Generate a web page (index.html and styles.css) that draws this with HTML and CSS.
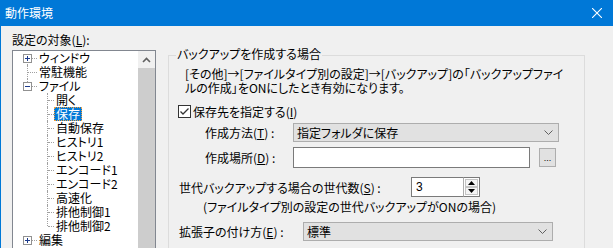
FILE: index.html
```html
<!DOCTYPE html>
<html lang="ja">
<head>
<meta charset="utf-8">
<title>動作環境</title>
<link rel="stylesheet" href="styles.css">
</head>
<body>
<div class="window">
  <div class="titlebar">
    <span class="title">動作環境</span>
    <svg class="close" width="10" height="10" viewBox="0 0 10 10"><path d="M0 0L10 10M10 0L0 10" stroke="#fff" stroke-width="1.1" fill="none"/></svg>
  </div>
  <div class="content">
    <div class="left">
      <div class="lbl">設定の対象(<u>L</u>):</div>
      <div class="tree">
        <div class="tree-items">
          <div class="node top has-exp vl-down"><svg class="exp" width="9" height="9"><rect x="0.5" y="0.5" width="8" height="8" fill="#fff" stroke="#919191"/><path d="M2 4.5H7M4.5 2V7" stroke="#1c3a8c"/></svg><span class="t">ウィンドウ</span></div>
          <div class="node top no-exp vl-full"><span class="t">常駐機能</span></div>
          <div class="node top has-exp vl-up"><svg class="exp" width="9" height="9"><rect x="0.5" y="0.5" width="8" height="8" fill="#fff" stroke="#919191"/><path d="M2 4.5H7" stroke="#1c3a8c"/></svg><span class="t">ファイル</span></div>
          <div class="node child"><span class="t">開く</span></div>
          <div class="node child"><span class="t sel">保存</span></div>
          <div class="node child"><span class="t">自動保存</span></div>
          <div class="node child"><span class="t">ヒストリ1</span></div>
          <div class="node child"><span class="t">ヒストリ2</span></div>
          <div class="node child"><span class="t">エンコード1</span></div>
          <div class="node child"><span class="t">エンコード2</span></div>
          <div class="node child"><span class="t">高速化</span></div>
          <div class="node child"><span class="t">排他制御1</span></div>
          <div class="node child last"><span class="t">排他制御2</span></div>
          <div class="node top has-exp"><svg class="exp" width="9" height="9"><rect x="0.5" y="0.5" width="8" height="8" fill="#fff" stroke="#919191"/><path d="M2 4.5H7M4.5 2V7" stroke="#1c3a8c"/></svg><span class="t">編集</span></div>
        </div>
        <div class="vscroll">
          <div class="sb-arrow"><svg width="9" height="6" viewBox="0 0 9 6"><path d="M1 5L4.5 1.5L8 5" stroke="#606060" stroke-width="1.6" fill="none"/></svg></div>
          <div class="sb-thumb"></div>
        </div>
      </div>
    </div>
    <div class="right">
      <div class="group">
        <span class="legend">バックアップを作成する場合</span>
        <div class="desc">[その他]→[ファイルタイプ別の設定]→[バックアップ]の「バックアップファイ<br>ルの作成」をONにしたとき有効になります。</div>
        <div class="row check-row">
          <svg class="checkbox" width="13" height="13" viewBox="0 0 13 13"><rect x="0.5" y="0.5" width="12" height="12" fill="#fff" stroke="#333"/><path d="M2.5 6.5L5 9L10.5 3.5" stroke="#333" stroke-width="1.3" fill="none"/></svg>
          <span>保存先を指定する(<u>I</u>)</span>
        </div>
        <div class="row method-row">
          <span class="label w-method">作成方法(<u>T</u>) :</span>
          <div class="select sel-method"><span>指定フォルダに保存</span><svg width="9" height="5" viewBox="0 0 9 5"><path d="M0.5 0.5L4.5 4.5L8.5 0.5" stroke="#606060" fill="none"/></svg></div>
        </div>
        <div class="row place-row">
          <span class="label w-method">作成場所(<u>D</u>) :</span>
          <div class="textbox tb-place"></div>
          <div class="btn-dots">...</div>
        </div>
        <div class="row gen-row">
          <span class="label w-gen">世代バックアップする場合の世代数(<u>S</u>) :</span>
          <div class="spin-input">3</div>
          <div class="spin-btns">
            <div class="spin-btn"><svg width="7" height="4" viewBox="0 0 7 4"><path d="M0 4L3.5 0L7 4Z" fill="#000"/></svg></div>
            <div class="spin-btn"><svg width="7" height="4" viewBox="0 0 7 4"><path d="M0 0L3.5 4L7 0Z" fill="#000"/></svg></div>
          </div>
        </div>
        <div class="note">(ファイルタイプ別の設定の世代バックアップがONの場合)</div>
        <div class="row ext-row">
          <span class="label w-ext">拡張子の付け方(<u>E</u>) :</span>
          <div class="select sel-ext"><span>標準</span><svg width="9" height="5" viewBox="0 0 9 5"><path d="M0.5 0.5L4.5 4.5L8.5 0.5" stroke="#606060" fill="none"/></svg></div>
        </div>
      </div>
    </div>
  </div>
</div>
</body>
</html>
```
FILE: styles.css
```css
html, body {
  margin: 0;
  padding: 0;
}
body {
  width: 613px;
  height: 248px;
  overflow: hidden;
  background: #f0f0f0;
  font-family: "Noto Sans CJK JP", "Noto Sans", sans-serif;
  font-size: 12px;
  font-feature-settings: "palt";
  color: #000;
}
u { text-decoration: underline; text-underline-offset: 1px; }

.window {
  height: 248px;
  display: flex;
  flex-direction: column;
}
.titlebar {
  height: 26px;
  flex: none;
  background: #0078d7;
  color: #fff;
  display: flex;
  align-items: center;
  justify-content: space-between;
  padding: 0 11px 0 5px;
  line-height: 14px;
}
.title { font-size: 12px; }
.close { display: block; }

.content {
  flex: 1;
  display: flex;
  border-left: 1px solid #0078d7;
  padding-left: 11px;
  min-height: 0;
}
.left {
  width: 144px;
  flex: none;
  padding-top: 7px;
}
.lbl {
  height: 14px;
  line-height: 14px;
  margin-bottom: 3px;
  white-space: nowrap;
}
.tree {
  height: 300px;
  border: 1px solid #828790;
  background: #fff;
  display: flex;
  box-sizing: border-box;
}
.tree-items {
  flex: 1;
  position: relative;
}
.vscroll {
  width: 17px;
  flex: none;
  background: #f0f0f0;
  display: flex;
  flex-direction: column;
}
.sb-arrow {
  height: 17px;
  display: flex;
  align-items: center;
  justify-content: center;
}
.sb-arrow svg { display: block; }
.sb-thumb {
  flex: 1;
  background: #cdcdcd;
}

.node {
  position: relative;
  height: 14px;
  line-height: 14px;
  white-space: nowrap;
}
.node.top { padding-left: 24px; }
.node.child { padding-left: 41px; }
.node .t {
  display: inline-block;
  vertical-align: top;
  line-height: 12px;
  height: 12px;
  padding: 0 1px;
  border: 1px solid transparent;
}
.node .t.sel {
  background: #0078d7;
  color: #fff;
  border: 1px dotted #f0a040;
}
.exp {
  position: absolute;
  left: 10px;
  top: 3px;
  display: block;
  z-index: 2;
}
.node.has-exp::before {
  content: "";
  position: absolute;
  left: 19px;
  top: 7px;
  width: 5px;
  border-top: 1px dotted #a0a0a0;
}
.node.no-exp::before {
  content: "";
  position: absolute;
  left: 15px;
  top: 7px;
  width: 9px;
  border-top: 1px dotted #a0a0a0;
}
.node.vl-down::after,
.node.vl-full::after,
.node.vl-up::after {
  content: "";
  position: absolute;
  left: 14px;
  border-left: 1px dotted #a0a0a0;
}
.node.vl-down::after { top: 7px; height: 7px; }
.node.vl-full::after { top: 0; height: 14px; }
.node.vl-up::after { top: 0; height: 7px; }
.node.child::before {
  content: "";
  position: absolute;
  left: 35px;
  top: 7px;
  width: 6px;
  border-top: 1px dotted #a0a0a0;
}
.node.child::after {
  content: "";
  position: absolute;
  left: 34px;
  top: 0;
  height: 14px;
  border-left: 1px dotted #a0a0a0;
}
.node.child.last::after { height: 7px; }

.right {
  margin-left: 12px;
  padding-top: 29px;
}
.group {
  position: relative;
  width: 417px;
  height: 260px;
  box-sizing: border-box;
  border: 1px solid #dcdcdc;
  padding: 11px 0 0 9px;
}
.legend {
  position: absolute;
  top: -9px;
  left: 7px;
  padding: 0 1px;
  background: #f0f0f0;
  line-height: 14px;
  white-space: nowrap;
}
.desc {
  margin-left: 7px;
  line-height: 14px;
  white-space: nowrap;
}
.row {
  display: flex;
  align-items: center;
  white-space: nowrap;
}
.check-row {
  margin-top: 9px;
  height: 14px;
  gap: 2px;
}
.checkbox { display: block; }
.method-row {
  margin-top: 5px;
  height: 19px;
  padding-left: 27px;
}
.place-row {
  margin-top: 5px;
  height: 21px;
  padding-left: 27px;
}
.label { flex: none; }
.w-method { width: 88px; }
.w-gen { width: 232px; padding-left: 1px; }
.w-ext { width: 124px; padding-left: 1px; }

.select {
  height: 19px;
  box-sizing: border-box;
  border: 1px solid #adadad;
  background: #e1e1e1;
  display: flex;
  align-items: center;
  justify-content: space-between;
  padding: 0 5px 0 3px;
}
.select svg { display: block; }
.sel-method { width: 266px; }
.sel-ext { width: 250px; }

.textbox {
  height: 21px;
  box-sizing: border-box;
  border: 1px solid #7a7a7a;
  background: #fff;
}
.tb-place { width: 237px; }
.btn-dots {
  margin-left: 9px;
  width: 17px;
  height: 19px;
  box-sizing: border-box;
  border: 1px solid #adadad;
  background: #e1e1e1;
  font-size: 9px;
  line-height: 19px;
  text-align: center;
  font-family: "Liberation Sans", sans-serif;
}

.gen-row {
  margin-top: 9px;
  height: 20px;
}
.spin-input {
  width: 52px;
  height: 20px;
  box-sizing: border-box;
  border: 1px solid #7a7a7a;
  border-right: none;
  background: #fff;
  padding-left: 4px;
  line-height: 18px;
  font-family: "Liberation Sans", sans-serif;
  font-size: 12px;
}
.spin-btns {
  width: 17px;
  height: 20px;
  box-sizing: border-box;
  border: 1px solid #7a7a7a;
  border-left: 1px solid #adadad;
  background: #fff;
  display: flex;
  flex-direction: column;
  padding: 1px;
  gap: 0;
}
.spin-btn {
  flex: 1;
  box-sizing: border-box;
  border: 1px solid #c4c4c4;
  background: #f4f4f4;
  display: flex;
  align-items: center;
  justify-content: center;
}
.spin-btn svg { display: block; }

.note {
  margin-top: 3px;
  padding-left: 25px;
  line-height: 14px;
  white-space: nowrap;
}
.ext-row {
  margin-top: 8px;
  height: 19px;
}
```
